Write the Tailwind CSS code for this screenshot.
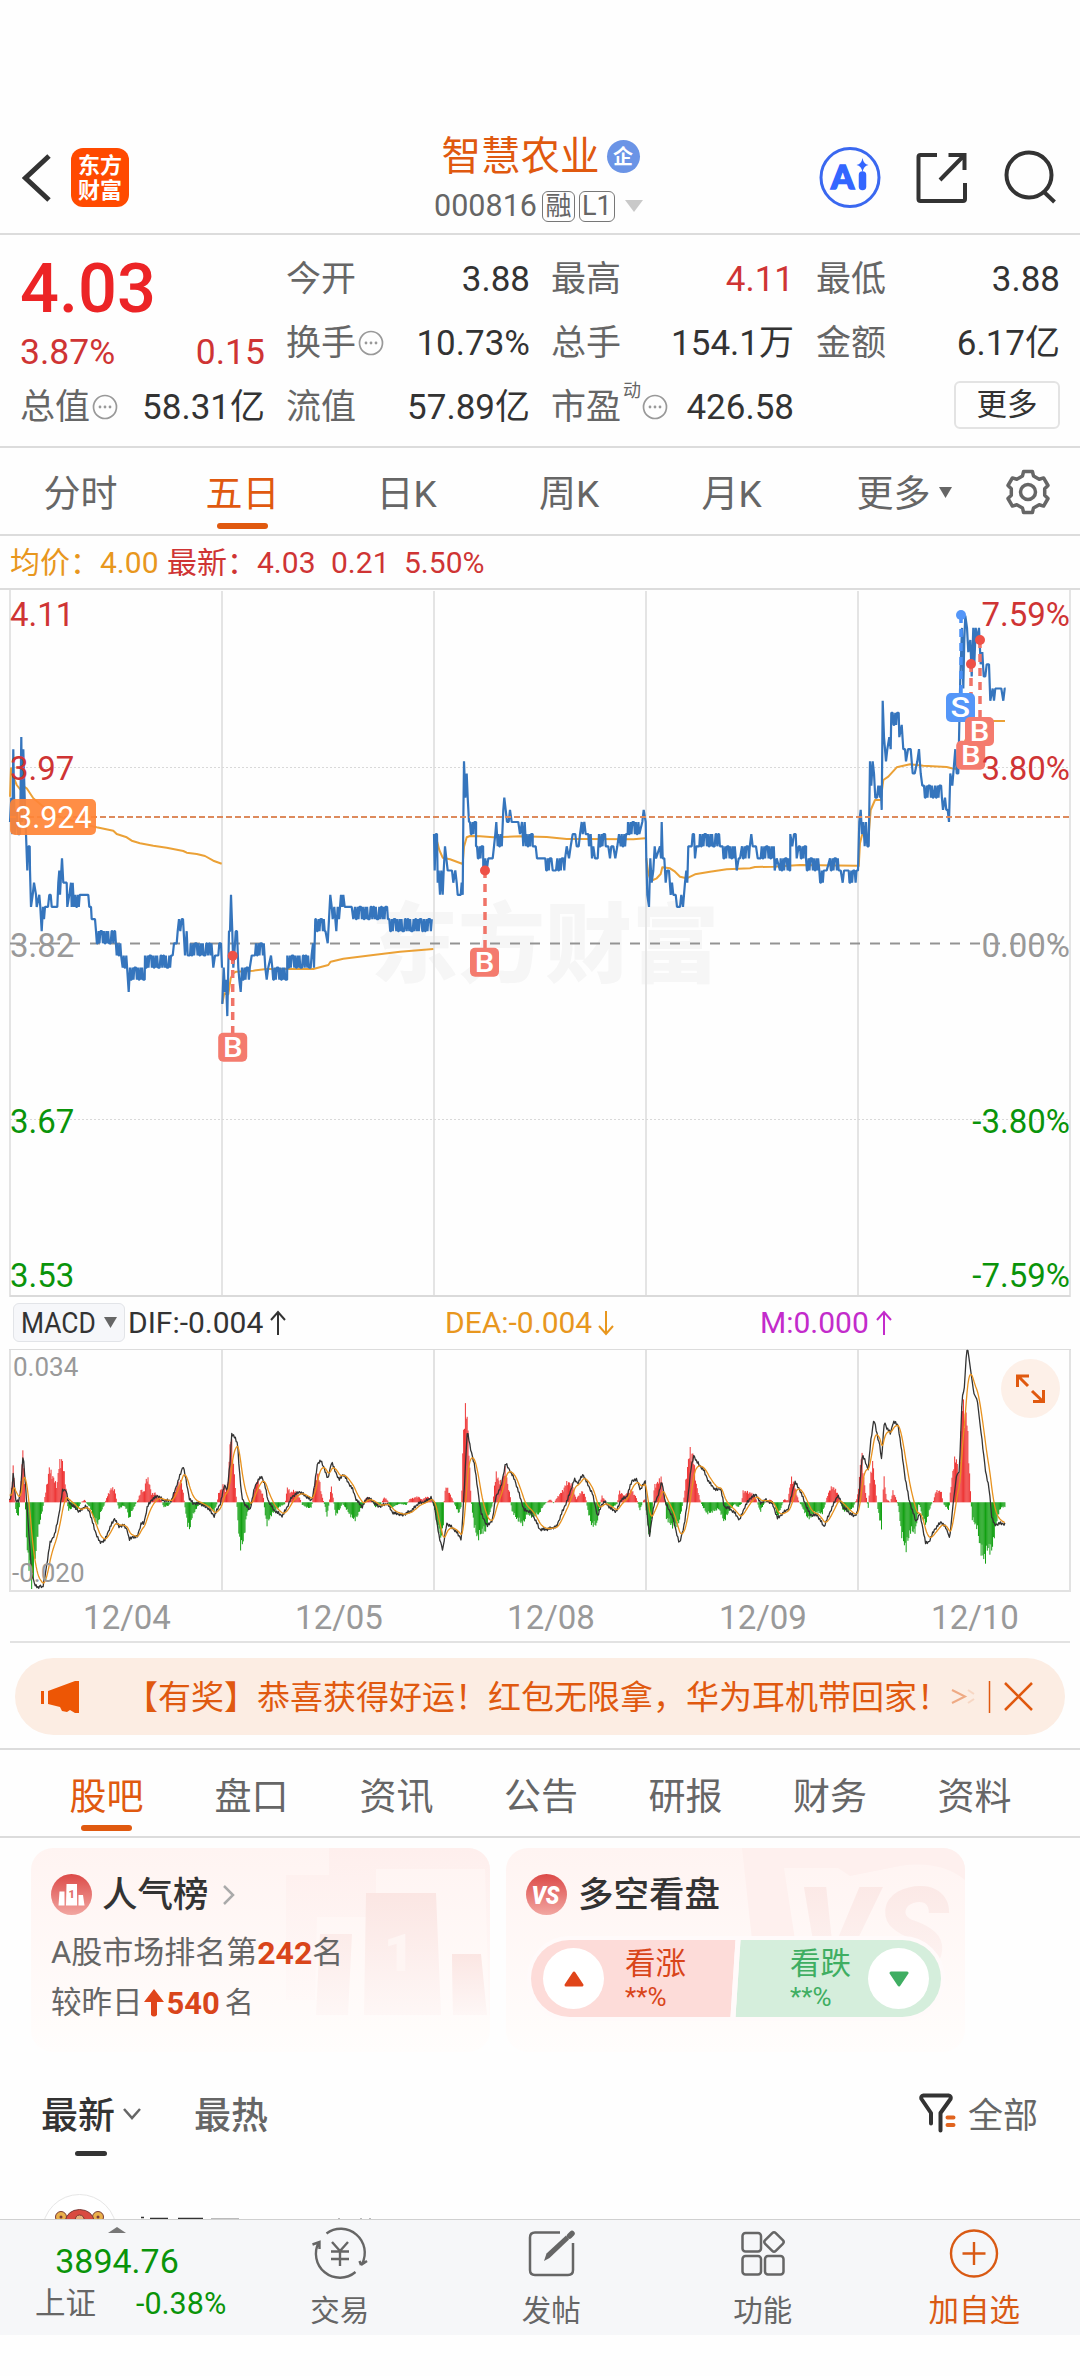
<!DOCTYPE html>
<html lang="zh-CN">
<head>
<meta charset="utf-8">
<title>智慧农业 000816</title>
<script src="https://cdn.jsdelivr.net/npm/@tailwindcss/browser@4"></script>
</head>
<body class="w-[1080px] h-[2376px] overflow-hidden bg-[#fefefe] font-[Roboto,'Noto_Sans_CJK_SC',sans-serif] text-[#666] leading-none">
<div class="flex h-[2376px] w-[1080px] flex-col">

  <!-- header -->
  <header class="flex h-[235px] shrink-0 items-start border-b-2 border-[#dcdcdc] pt-[120px]">
    <div class="flex w-[340px] items-center pt-[28px] pl-[22px]">
      <svg class="h-[58px] w-[49px]" viewBox="22 149 49 58" fill="none" stroke="#333" stroke-width="5"><path d="M49 156 L25.500 178 L49 200"/></svg>
      <div class="flex h-[59px] w-[58px] flex-col items-center justify-center rounded-[12px] bg-[#ff4a00] text-[22px] leading-[25px] font-bold text-white"><span>东方</span><span>财富</span></div>
    </div>
    <div class="flex w-[400px] flex-col items-center">
      <div class="flex h-[70px] items-center gap-[7px] pt-[3px] pl-[1px]"><span class="text-[39.500px] text-[#e0590f]">智慧农业</span><span class="flex size-[33px] items-center justify-center rounded-full bg-[#6b94e6] text-[20px] font-bold text-white">企</span></div>
      <div class="flex h-[32px] items-center pr-[3px]">
        <span class="text-[30.500px]">000816</span>
        <span class="ml-[5px] flex h-[31px] w-[33px] items-center justify-center rounded-[6px] border-[1.500px] border-[#777] text-[26px]">融</span>
        <span class="ml-[4px] flex h-[31px] w-[36px] items-center justify-center rounded-[6px] border-[1.500px] border-[#777] text-[27px]">L1</span>
        <svg class="ml-[10px] h-[14px] w-[18px]" viewBox="0 0 18 14"><path d="M0 1h18L9 13z" fill="#c9c9c9"/></svg>
      </div>
    </div>
    <svg class="mt-[24px] h-[70px] w-[340px]" viewBox="740 144 340 70" fill="none" stroke="#333" stroke-width="4">
      <circle cx="850" cy="177.500" r="29" stroke="#3a68f0" stroke-width="3"/>
      <text x="831" y="189" font-size="33" font-weight="900" fill="#3366ff" stroke="#3366ff" stroke-width="1.500" font-family="Lato">A</text>
      <path d="M862.500 175v11.500" stroke="#3366ff" stroke-width="7.500" stroke-linecap="round"/>
      <path d="M862.500 158q1 6 6 7q-5 1-6 7q-1-6-6-7q5-1 6-7z" fill="#3366ff" stroke="none"/>
      <path d="M937 155h-16.500q-2 0-2 2v42q0 2 2 2h42.500q2 0 2-2v-16M964.500 170v-15h-16M963.500 156L940 180"/>
      <circle cx="1029" cy="175" r="22.500"/><path d="M1043 191l11.500 11"/>
    </svg>
  </header>

  <!-- quote -->
  <section class="flex h-[213px] shrink-0 border-b-2 border-[#dcdcdc] text-[35px] text-[#333]">
    <div class="flex w-[287px] flex-col pr-[22px] pl-[20px]">
      <div class="pt-[20px] text-[68.500px] leading-[68px] font-medium text-[#ec2426]">4.03</div>
      <div class="mt-[10px] flex h-[40px] items-center justify-between text-[35.500px] text-[#cf3434]"><span>3.87%</span><span>0.15</span></div>
      <div class="mt-[14px] flex h-[40px] items-center"><span class="text-[#666]">总值</span><svg class="ml-[2px] size-[26px]" viewBox="0 0 26 26"><use href="#dots"/></svg><span class="ml-auto">58.31亿</span></div>
    </div>
    <div class="-ml-px flex w-[265px] flex-col gap-[24px] pt-[24px] pr-[21px]">
      <div class="flex h-[40px] items-center justify-between"><span class="text-[#666]">今开</span><span>3.88</span></div>
      <div class="flex h-[40px] items-center"><span class="text-[#666]">换手</span><svg class="ml-[2px] size-[26px]" viewBox="0 0 26 26"><use href="#dots"/></svg><span class="ml-auto">10.73%</span></div>
      <div class="flex h-[40px] items-center justify-between"><span class="text-[#666]">流值</span><span>57.89亿</span></div>
    </div>
    <div class="flex w-[265px] flex-col gap-[24px] pt-[24px] pr-[22px]">
      <div class="flex h-[40px] items-center justify-between"><span class="text-[#666]">最高</span><span class="text-[#cf3434]">4.11</span></div>
      <div class="flex h-[40px] items-center justify-between"><span class="text-[#666]">总手</span><span>154.1万</span></div>
      <div class="flex h-[40px] items-center"><span class="text-[#666]">市盈</span><span class="-mt-[32px] ml-[2px] text-[18px] text-[#666]">动</span><svg class="ml-px size-[26px]" viewBox="0 0 26 26"><use href="#dots"/></svg><span class="ml-auto">426.58</span></div>
    </div>
    <div class="flex w-[264px] flex-col gap-[24px] pt-[24px] pr-[20px]">
      <div class="flex h-[40px] items-center justify-between"><span class="text-[#666]">最低</span><span>3.88</span></div>
      <div class="flex h-[40px] items-center justify-between"><span class="text-[#666]">金额</span><span>6.17亿</span></div>
      <div class="-mt-[6px] ml-auto flex h-[48px] w-[106px] items-center justify-center rounded-[6px] border-2 border-[#e3e3e3] text-[30.500px]">更多</div>
    </div>
  </section>

  <!-- period tabs -->
  <nav class="flex h-[88px] shrink-0 border-b-2 border-[#dcdcdc] text-[37px]">
    <div class="flex w-[161px] justify-center pt-[28px]">分时</div>
    <div class="flex w-[163px] flex-col items-center pt-[28px] text-[#e0590f]">五日<span class="mt-[10px] h-[6px] w-[51px] rounded-full bg-[#e0590f]"></span></div>
    <div class="flex w-[165px] justify-center pt-[28px]">日K</div>
    <div class="flex w-[160px] justify-center pt-[28px]">周K</div>
    <div class="flex w-[165px] justify-center pt-[28px]">月K</div>
    <div class="flex w-[170px] justify-center gap-[8px] pt-[28px] pl-[10px]">更多<svg class="mt-[11px] h-[11px] w-[13px]" viewBox="0 0 13 11"><path d="M0 0h13L6.500 11z" fill="#666"/></svg></div>
    <svg class="mt-[20px] ml-[20px] h-[48px] w-[48px]" viewBox="-24 -24 48 48" fill="none" stroke="#666" stroke-width="3.500" stroke-linejoin="round"><path id="gear"/><circle r="7.500"/></svg>
  </nav>

  <div class="flex h-[54px] shrink-0 items-center border-b-2 border-[#dcdcdc] pt-[2px] pl-[10px] text-[30px] text-[#cf3434]">
    <span class="w-[90px] text-[#e8971e]">均价：</span><span class="w-[67px] text-[#e8971e]">4.00</span><span class="w-[90px]">最新：</span><span class="w-[74px]">4.03</span><span class="w-[73px]">0.21</span><span>5.50%</span>
  </div>

  <!-- price chart -->
  <svg class="h-[708px] w-[1080px] shrink-0" viewBox="0 590 1080 708" fill="none">
    <defs>
      <g id="dots"><circle cx="13" cy="13" r="11.500" fill="none" stroke="#999" stroke-width="1.700"/><g fill="#999"><circle cx="8" cy="13" r="1.400"/><circle cx="13" cy="13" r="1.400"/><circle cx="18" cy="13" r="1.400"/></g></g>
      <g id="buy"><rect x="-14.500" y="-14.500" width="29" height="29" rx="5" fill="#f47b6e"/><text y="9.700" font-size="27" font-weight="500" fill="#fff" text-anchor="middle" transform="scale(1.15 1)">B</text></g>
    </defs>
    <text x="371" y="976" font-size="87" font-weight="900" fill="#f6f6f6">东方财富</text>
    <path d="M10 590V1297M222 591V1297M434 591V1297M646 591V1297M858 591V1297M1070 590V1297" stroke="#e4e4e4" stroke-width="2"/>
    <path d="M10 1296H1070" stroke="#dadada" stroke-width="2"/>
    <path d="M10 767.500H1070M10 1119.500H1070" stroke="#d9d9d9" stroke-dasharray="2 2"/>
    <path d="M10 943.500H1070" stroke="#939393" stroke-width="2" stroke-dasharray="10 10"/>
    <path id="avg" stroke="#eba136" stroke-width="2" stroke-linejoin="round"/>
    <path id="price" stroke="#3575bd" stroke-width="2.200" stroke-linejoin="bevel"/>
    <path d="M10 817H1070" stroke="#dd8a5c" stroke-width="1.800" stroke-dasharray="6 3"/>
    <g stroke="#f07468" stroke-width="3.500" stroke-dasharray="8 6"><path d="M232.700 956V1033M485 870V948M980 640V718M971 664V742"/><path d="M961 615V694" stroke="#4a90f5"/></g>
    <g fill="#ee5147"><circle cx="232.700" cy="955.700" r="5"/><circle cx="485" cy="870.500" r="5"/><circle cx="980" cy="640" r="5"/><circle cx="971" cy="664" r="5"/><circle cx="961" cy="615" r="5" fill="#5496f8"/></g>
    <rect x="946" y="693" width="29" height="29" rx="5" fill="#5496f8"/><text x="835" y="717.500" font-size="28" font-weight="500" fill="#fff" text-anchor="middle" transform="scale(1.15 1)">S</text>
    <use href="#buy" x="232.700" y="1047.300"/><use href="#buy" x="484.500" y="962.300"/><use href="#buy" x="970.700" y="755.300"/><use href="#buy" x="979.500" y="731.500"/>
    <rect x="10" y="799" width="86" height="36" rx="5" fill="#ff8436" fill-opacity=".92"/>
    <text x="15" y="828" font-size="30.500" fill="#fff">3.924</text>
    <g font-size="33" fill="#cf3434"><text x="10" y="626">4.11</text><text x="10" y="780">3.97</text><text x="10" y="957" fill="#999">3.82</text><text x="10" y="1133" fill="#0a940a">3.67</text><text x="10" y="1287" fill="#0a940a">3.53</text>
      <g text-anchor="end"><text x="1070" y="626">7.59%</text><text x="1070" y="780">3.80%</text><text x="1070" y="957" fill="#999">0.00%</text><text x="1070" y="1133" fill="#0a940a">-3.80%</text><text x="1070" y="1287" fill="#0a940a">-7.59%</text></g></g>
  </svg>

  <!-- indicator values -->
  <div class="flex h-[51px] shrink-0 items-start pt-[5px] pl-[13px] text-[30px]">
    <div class="flex h-[39px] w-[112px] items-center rounded-[6px] border border-[#e2e4e8] bg-[#f6f7fa] pl-[7px] text-[#333]"><span class="w-[83px] origin-left scale-x-[0.88]">MACD</span><svg class="h-[11px] w-[13px]" viewBox="0 0 13 11"><path d="M0 0h13L6.500 11z" fill="#666"/></svg></div>
    <div class="flex h-[39px] w-[320px] items-center gap-[7px] pl-[3px] text-[#333]">DIF:-0.004<svg class="h-[26px] w-[16px]" viewBox="0 0 16 26" fill="none" stroke="currentColor" stroke-width="2"><path d="M8 25V2M1 10l7-8l7 8"/></svg></div>
    <div class="flex h-[39px] w-[315px] items-center gap-[6px] text-[#e8971e]">DEA:-0.004<svg class="h-[26px] w-[16px]" viewBox="0 0 16 26" fill="none" stroke="currentColor" stroke-width="2"><path d="M8 1V24M1 16l7 8l7-8"/></svg></div>
    <div class="flex h-[39px] items-center gap-[7px] text-[#c32bcb]">M:0.000<svg class="h-[26px] w-[16px]" viewBox="0 0 16 26" fill="none" stroke="currentColor" stroke-width="2"><path d="M8 25V2M1 10l7-8l7 8"/></svg></div>
  </div>

  <!-- MACD chart -->
  <svg class="h-[243px] w-[1080px] shrink-0" viewBox="0 1349 1080 243" fill="none">
    <path d="M10 1349V1591M222 1349V1591M434 1349V1591M646 1349V1591M858 1349V1591M1070 1349V1591M9 1591H1071" stroke="#e2e2e2" stroke-width="2"/>
    <path d="M9 1349.500H1071" stroke="#dcdcdc"/>
    <path id="up" stroke="#ee3434" stroke-width="1"/>
    <path id="down" stroke="#12a012" stroke-width="1"/>
    <path id="dif" stroke="#333" stroke-width="1.300" stroke-linejoin="round"/>
    <path id="dea" stroke="#e8921e" stroke-width="1.300" stroke-linejoin="round"/>
    <g font-size="26" fill="#999"><text x="13" y="1376">0.034</text><text x="12" y="1582">-0.020</text></g>
    <circle cx="1030.500" cy="1388.500" r="29.500" fill="#fdf0e8"/>
    <path d="M1028 1386L1018 1376M1029 1376H1017.500V1387M1032 1391L1043 1401.500M1033 1401.500H1043.500V1390" stroke="#e0590f" stroke-width="3"/>
  </svg>

  <div class="mx-[10px] flex h-[51px] shrink-0 items-center border-b-2 border-[#e2e2e2] pt-[2px] pl-[11px] text-[33px] text-[#999]">
    <span class="w-[212px] shrink-0 text-center">12/04</span><span class="w-[212px] shrink-0 text-center">12/05</span><span class="w-[212px] shrink-0 text-center">12/08</span><span class="w-[212px] shrink-0 text-center">12/09</span><span class="w-[212px] shrink-0 text-center">12/10</span>
  </div>

  <!-- announcement -->
  <div class="h-[107px] shrink-0 border-b-2 border-[#dcdcdc] px-[15px] pt-[15px]">
    <div class="flex h-[77px] items-center rounded-full bg-[#fcede3] pl-[25px] text-[33px] text-[#e0590f]">
      <svg class="h-[34px] w-[40px]" viewBox="0 0 40 34"><path d="M1 11h3v13H1zM8 11L35 1h4v32h-4l-5-3l-3 2l-5-1l-2-4L8 24z" fill="#ed5605"/></svg>
      <span class="ml-[45px] w-[824px] pt-[2px] whitespace-nowrap">【有奖】恭喜获得好运！红包无限拿，华为耳机带回家！</span>
      <svg class="h-[34px] w-[100px]" viewBox="949 1680 100 34" fill="none" stroke="#e0590f" stroke-width="2"><path d="M952 1690l13 6.500l-13 6.500" stroke-opacity=".45"/><path d="M968 1690l6 4M968 1703l6-4" stroke-opacity=".15"/><path d="M989.500 1681v32" stroke-width="1.500"/><path d="M1005 1683l27 27M1032 1683l-27 27" stroke-width="2.500"/></svg>
    </div>
  </div>

  <nav class="flex h-[88px] shrink-0 border-b-2 border-[#dcdcdc] pl-[34px] text-[37px]">
    <div class="flex w-[145px] flex-col items-center pt-[29px] text-[#e0590f]">股吧<span class="mt-[9px] h-[6px] w-[51px] rounded-full bg-[#e0590f]"></span></div>
    <div class="w-[145px] pt-[29px] text-center">盘口</div><div class="w-[145px] pt-[29px] text-center">资讯</div><div class="w-[144px] pt-[29px] text-center">公告</div><div class="w-[145px] pt-[29px] text-center">研报</div><div class="w-[144px] pt-[29px] text-center">财务</div><div class="w-[145px] pt-[29px] text-center">资料</div>
  </nav>

  <!-- cards -->
  <section class="flex h-[214px] shrink-0 gap-[16px] pt-[10px] pl-[31px]">
    <div class="relative flex h-[204px] w-[459px] flex-col overflow-hidden rounded-[22px] bg-gradient-to-b from-[#fff4f2] to-[#fffdfc] pl-[20px]">
      <svg class="absolute inset-0 h-full w-full" viewBox="31 1848 459 204">
        <defs><linearGradient id="fade" x1="0" y1="0" x2="0" y2="1"><stop offset="0" stop-color="#fbe6e3"/><stop offset="1" stop-color="#fef7f6"/></linearGradient>
        <linearGradient id="soft" x1="0" y1="0" x2="0" y2="1"><stop offset="0" stop-color="#feefed"/><stop offset="1" stop-color="#fffaf9"/></linearGradient>
        <linearGradient id="ball" x1="0" y1="0" x2="0" y2="1"><stop offset="0" stop-color="#dc4a48"/><stop offset="1" stop-color="#f2a6a1"/></linearGradient></defs>
        <path d="M329 1848H490V2015H489L485 1869H376V1917H317L315 2000H286V1875H329z" fill="url(#soft)"/>
        <path d="M397 1893H467L472 2015H395zM351 1934H383L379 2015H347zM483 1954H490V2015H484z" fill="url(#fade)" transform="translate(-31 0)"/>
        <path d="M452 1954H481L487 2015H453z" fill="url(#fade)"/>
        <text x="384" y="1971" font-size="52" font-weight="900" font-family="Roboto" fill="#fef5f3">1</text>
      </svg>
      <div class="relative flex items-center pt-[26px] text-[35.500px] font-medium text-[#333]">
        <svg class="mr-[10px] size-[41px]" viewBox="0 0 41 41"><circle cx="20.500" cy="20.500" r="20.500" fill="url(#ball)"/><path d="M15.500 10h10.500v21.500H15zM8.500 17.500h5V31.500h-6zM27.500 21h4.500l1.500 10.500h-6z" fill="#fff"/><text x="17.500" y="24" font-size="11" font-weight="900" fill="#e2706c">1</text></svg>
        <span class="pt-[2px]">人气榜</span>
        <svg class="ml-[14px] h-[20px] w-[12px]" viewBox="0 0 12 20" fill="none" stroke="#aaa" stroke-width="2.500"><path d="M1 1l9 9l-9 9"/></svg>
      </div>
      <div class="relative mt-[20px] flex h-[35px] items-center text-[31px]">A股市场排名第<b class="text-[32px] text-[#d9451a]">242</b>名</div>
      <div class="relative mt-[17px] flex h-[32px] items-center text-[30.500px]">较昨日<svg class="mx-px h-[30px] w-[20px]" viewBox="0 0 20 30"><path d="M10 1l10 13h-7v13q-3 3-6 0V14H0z" fill="#e0451a"/></svg><b class="ml-[2px] text-[31px] text-[#d9451a]">540</b><span class="ml-[5px] text-[29px]">名</span></div>
    </div>
    <div class="relative flex h-[204px] w-[459px] flex-col overflow-hidden rounded-[22px] bg-gradient-to-b from-[#fff4f2] to-[#fffdfc] pl-[20px]">
      <svg class="absolute inset-0 h-full w-full" viewBox="506 1848 459 204">
        <path d="M742 1848H965V1880Q940 1860 900 1866L850 1876L838 1868H784L795 1940H752z" fill="#fef0ee"/>
        <text x="796" y="1974" font-size="122" font-weight="900" font-style="italic" font-family="Roboto" fill="url(#fade)">VS</text>
      </svg>
      <div class="relative flex items-center pt-[26px] text-[35.500px] font-medium text-[#333]">
        <svg class="mr-[11px] size-[41px]" viewBox="0 0 41 41"><circle cx="20.500" cy="20.500" r="20.500" fill="url(#ball)"/><text x="19.500" y="30" font-size="26" font-weight="900" font-style="italic" fill="#fff" text-anchor="middle" textLength="28" lengthAdjust="spacingAndGlyphs">VS</text></svg>
        <span class="pt-[2px]">多空看盘</span>
      </div>
      <div class="relative mt-[21px] ml-px flex h-[85px] w-[418px] overflow-hidden rounded-full border-4 border-[#fffafa]">
        <svg class="absolute inset-0 h-full w-full" viewBox="531 1940 410 77"><path d="M531 1940H735.500L730.500 2017H531z" fill="#fddcd9"/><path d="M740.500 1940H941V2017H735.500z" fill="#d5eedc"/><path d="M735.500 1940H740.500L735.500 2017H730.500z" fill="#fffafa"/></svg>
        <div class="relative flex w-full items-center">
          <span class="ml-[12px] flex size-[61px] items-center justify-center rounded-full bg-white"><svg class="h-[16px] w-[20px]" viewBox="0 0 20 16"><path d="M10 2L18 14H2z" fill="#e0451a" stroke="#e0451a" stroke-width="3" stroke-linejoin="round"/></svg></span>
          <span class="ml-[21px] flex flex-col gap-[3px] pt-px text-[#d9451a]"><span class="text-[30.500px] leading-[32px]">看涨</span><span class="text-[26px] leading-[28px]">**%</span></span>
          <span class="ml-auto flex flex-col gap-[3px] pt-px text-[#3fae62]"><span class="text-[30.500px] leading-[32px]">看跌</span><span class="text-[26px] leading-[28px]">**%</span></span>
          <span class="mr-[12px] ml-[17px] flex size-[61px] items-center justify-center rounded-full bg-white"><svg class="h-[16px] w-[20px]" viewBox="0 0 20 16"><path d="M10 14L18 2H2z" fill="#3fae62" stroke="#3fae62" stroke-width="3" stroke-linejoin="round"/></svg></span>
        </div>
      </div>
    </div>
  </section>

  <!-- post list -->
  <div class="flex h-[142px] shrink-0 pt-[46px] pr-[42px] pl-[41px] text-[37px] font-medium">
    <div class="flex flex-col text-[#333]"><div class="flex items-center gap-[8px]">最新<svg class="-mt-[6px] h-[12px] w-[18px]" viewBox="0 0 18 12" fill="none" stroke="#666" stroke-width="2.500"><path d="M1 1l8 9l8-9"/></svg></div><span class="mt-[16px] ml-[34px] h-[5px] w-[32px] rounded-full bg-[#333]"></span></div>
    <div class="ml-[53px]">最热</div>
    <div class="ml-auto flex h-[37px] items-center gap-[11px] text-[35px] font-normal"><svg class="-mt-[7px] h-[40px] w-[38px]" viewBox="918 2093 38 40" fill="none" stroke="#333" stroke-width="4" stroke-linecap="round" stroke-linejoin="round"><path d="M930 2123.500V2113L920.500 2099q-1-3 2-3.500h25q3 .5 2 3.500L939.500 2113v17.500"/><path d="M946.500 2117.500h6M946.500 2125h6" stroke="#e0641f"/></svg>全部</div>
  </div>
  <div class="flex h-[25px] shrink-0 overflow-hidden pl-[42px]">
    <svg class="h-[25px] w-[400px]" viewBox="42 2194 400 25"><circle cx="79.500" cy="2231.500" r="37" fill="#fff" stroke="#e6e6e6"/><g stroke="#7a3a35"><circle cx="61" cy="2217" r="5.500" fill="#eab04a"/><circle cx="98" cy="2217" r="5.500" fill="#eab04a"/><path d="M65 2222q2-12 14.500-12.500q13 .5 15 12.500z" fill="#d94b40"/><path d="M75 2222q0-7 4.500-7q5 0 5 7z" fill="#eab07a"/></g><circle cx="61" cy="2217" r="1.500" fill="#7a3a35"/><circle cx="98" cy="2217" r="1.500" fill="#7a3a35"/><path d="M141 2217.500h3M150 2218.500h18M178 2218.500h25" stroke="#333" stroke-width="1.500"/><path d="M211 2218.500h28M338 2218.500h2M360 2218.500h2M369 2218.500h2" stroke="#bbb"/></svg>
  </div>

  <!-- bottom bar -->
  <footer class="flex h-[116px] shrink-0 border-t border-[#d0d0d0] bg-[#f6f7f9] text-[29.500px]">
    <div class="flex w-[234px] flex-col items-center text-[#0a940a]">
      <svg class="mt-[7px] h-[6px] w-[18px]" viewBox="0 0 18 6"><path d="M0 6L9 0l9 6z" fill="#777"/></svg>
      <span class="mt-[10px] text-[34px] leading-[36px]">3894.76</span>
      <div class="mt-[9px] flex w-full items-center pl-[35px] text-[30.500px] leading-[32px]"><span class="w-[101px] text-[#666]">上证</span><span>-0.38%</span></div>
    </div>
    <div class="flex w-[211.500px] flex-col items-center"><svg class="mt-[6px] h-[54px] w-[60px]" viewBox="310 2226 60 54" fill="none" stroke="#666" stroke-width="2.400"><path d="M326.500 2233.500A24 24 0 0 1 362 2264M361 2265l6-4M361 2265l-1.500-4M355.500 2272A24 24 0 0 1 319 2242M312.500 2244.500l7-2.500l0 7M332 2242l8 9l8-9M340 2251v15M331 2251.500h18M331 2259h18"/></svg><span class="mt-[15px] leading-[32px]">交易</span></div>
    <div class="flex w-[211.500px] flex-col items-center"><svg class="mt-[6px] h-[54px] w-[60px]" viewBox="521 2226 60 54" fill="none" stroke="#666" stroke-width="2.500"><path d="M560 2232.500h-25q-5 0-5 5v32.500q0 5 5 5h33q5 0 5-5v-27"/><path d="M544 2261l2.500-7.500L566 2235.500l3 4L549.500 2258z" fill="#666" stroke="none"/><path d="M569.500 2236l2.500-2.500" stroke-width="5.500" stroke-linecap="round"/></svg><span class="mt-[15px] leading-[32px]">发帖</span></div>
    <div class="flex w-[211.500px] flex-col items-center"><svg class="mt-[6px] h-[54px] w-[60px]" viewBox="733 2226 60 54" fill="none" stroke="#666" stroke-width="2.500"><rect x="742.500" y="2233" width="18.500" height="18.500" rx="3"/><rect x="742.500" y="2256" width="18.500" height="18.500" rx="3"/><rect x="765" y="2256" width="18.500" height="18.500" rx="3"/><rect x="766.500" y="2234.500" width="15" height="15" rx="2.500" transform="rotate(45 774 2242)"/></svg><span class="mt-[15px] leading-[32px]">功能</span></div>
    <div class="flex w-[211.500px] flex-col items-center text-[#d95a14]"><svg class="mt-[6px] h-[54px] w-[60px]" viewBox="943.500 2226 60 54" fill="none" stroke="currentColor" stroke-width="2.400"><circle cx="973.500" cy="2253.500" r="23"/><path d="M973.500 2242v23M962 2253.500h23"/></svg><span class="mt-[15px] text-[30.500px] leading-[32px]">加自选</span></div>
  </footer>
</div>

<script>
const $ = id => document.getElementById(id);

// Gear outline: six teeth around the hub.
let g = '';
for (let i = 0; i < 6; i++) {
  [[-12, 21], [12, 21], [19, 17], [41, 17]].forEach(([a, r]) => {
    const t = (i * 60 - 90 + a) * Math.PI / 180;
    g += (g ? 'L' : 'M') + (r * Math.cos(t)).toFixed(1) + ' ' + (r * Math.sin(t)).toFixed(1);
  });
}
$('gear').setAttribute('d', g + 'z');

// Intraday prices: "x,ticks" is a point, "x0-x1:hi/lo" a stretch alternating between two ticks.
const days = [
  [0, '30,10 34,12 37,9 40,16 44,9 50,11 54,9 60,9 64,17 67,10 70,16 74,12 78,9 82,6 85,8 89,8 90,6 93,3 98,4 102,5 108,4 110,3 118,4 121,3 125,1 129,3 132,2 135,3 144,3 148,4 152,4 155,3 172,3 175,5 178,6 180,4 186,7 190,5 200,5 202,3 208,4 213,5 215,3 218,5 222,3 226-240:4/3 241,4 265,4 268,3 273,3 275,2 285,2 288-345:1/0 350,-1 353-365:0/-1 368,-2 371-383:-1/-2 386,-4 390-432:-2/-3 435-515:-1/-2 518,-1 522,0 530,0 533,1 537,2 541,1 545,2 549,2 555,-1 560,1 563,-1 570,-1 572-635:0/-1 640,-2 645,-1 655,-1 658,0 663,0 666,-2'],
  [0, '667,-5 671,-2 675,-4 678,-3 682,-6 687,1 690,1 693,4 697,1 700,-2 703,-1 707,1 711,1 715,-2 718,-3 722,-4 726-752:-2/-3 755,-1 765,-1 768-792:0/-1 796,-2 800,-3 805,-2 813,-1 817-860:-2/-3 862-936:-1/-2 939,0 942,-2 946,2 948-976:2/1 983,0 987,2 991,4 995,3 998,2 1003,3 1009,1 1013,3 1017,2 1023,4 1027,3 1030,4 1034,3 1055,3 1060,2 1065-1165:3/2 1168-1297:2/1'],
  [1260, '42,9 44,6 47,9 51,9 53,5 56,6 60,4 64,6 68,4 71,6 75,8 79,7 83,6 96,6 100,5 106,6 110,5 113,4 122,4 125,5 128,4 130,10 132,15 136,12 140,14 143,12 147,10 150-165:10/9 168,8 171-187:8/7 190,6 196,7 200,6 205,7 218,7 222,8 226,9 229,10 233,8 235-247:9/8 250,11 253,12 257,11 261,10 266,10 270,11 275,10 295,10 300,9 306,10 310,8 314,10 318,8 320-334:9/8 338,8 347,8 351,7 372,7 376-392:7/6 398,6 408,6 412-437:7/6 440,8 447,7 452,8 458,9 466,9 470,8 476,8 480,9 485,10 488,9 493,10 497,9 505,9 507,8 512,9 516,7 520,8 525,7 533,7 537-553:9/8 557,8 565,8 570,7 574,8 580,8 586,7 592,8 597,9 602,8 605-622:9/8 624-660:10/9 667,10 671,11 677,10'],
  [1260, '679,7 682,4 687,3 691,7 695,5 700,6 704,8 708,7 720,8 723,7 725,10 728,7 733,7 737,5 741,6 747,6 752,4 756,5 760,4 767,4 771,3 780,3 784,4 789,3 795,5 799,6 802,5 805,8 815,8 818,9 822,9 825,7 829,8 838,8 840-900:9/8 905,8 908-945:8/7 950,6 956,7 960,7 966-990:8/7 994,9 998,8 1008,8 1013,7 1022,7 1025-1062:8/7 1064,6 1070,7 1080,6 1082-1108:7/6 1111,9 1117,8 1122,9 1127,9 1130,7 1136,8 1140-1155:8/7 1158-1195:7/6 1198-1218:6/5 1220,6 1230-1258:7/6 1262,6 1268,5 1272,6 1282,6 1286-1310:6/5 1313,6'],
  [2340, '234,6 238,10 242,11 246,9 250,10 254,8 258,10 262,8 266,8 268,11 270,15 274,13 278,15 282,14 286,12 291,12 295,13 300,12 302,13 305,11 308,20 312,17 318,15 322,16 328,17 332,16 334,19 338-354:19/18 358,17 365,18 370,16 375,16 378,15 384,16 392,16 398,14 404,14 412,15 417,16 422,14 427,13 432-460:13/12 465-486:13/12 489,11 495,12 499,11 503,11 507,10 511,14 517,13 520,14 526,16 530,14 535,14 538,18 541,22 546,26 550,21 553,25 556,27 561,26 565,24 571,25 575,22 580,26 583,23 587,26 591,25 597,26 602,23 607,24 611,22 616,22 620,23 627,23 631,20 638,21 642,20 646,21 664,21 670,20 674,21 677,21']
];
let d = '';
days.forEach(([off, s], n) => {
  const pts = [];
  s.split(' ').forEach(t => {
    const m = t.match(/^(\d+)-(\d+):(-?\d+)\/(-?\d+)$/);
    if (!m) { pts.push(t.split(',').map(Number)); return; }
    let x = +m[1], hi = true, i = 0;
    while (x <= +m[2]) {
      pts.push([x, hi ? +m[3] : +m[4]]);
      const hold = [0, 2.600, 0, 0, 5.200, 0, 0, 2.600, 0, 0, 0, 5.200, 2.600][i++ % 13];
      if (hold) { x += hold; pts.push([x, hi ? +m[3] : +m[4]]); }
      x += 2.600; hi = !hi;
    }
  });
  const start = n === 1 || n === 2 ? 'M' : 'L';
  pts.forEach(([x, k], i) => d += (i ? 'L' : (d ? start : 'M')) + ((x + off) / 3).toFixed(1) + ' ' + (580 + (1090 - 36.400 * k) / 3).toFixed(1));
});
$('price').setAttribute('d', d);

const averages = [
  [0, '30,650 33,565 40,590 50,615 62,630 72,620 80,625 100,655 130,680 180,710 240,730 290,742 340,752 350,762 380,772 395,782 420,790 460,797 500,803 550,813 560,818 590,822 615,828 640,842 665,851'],
  [0, '667,1270 673,1240 685,1243 692,1195 700,1180 708,1175 760,1172 800,1167 940,1167 985,1155 992,1145 1030,1136 1120,1125 1200,1115 1300,1107'],
  [1260, '44,770 50,780 58,810 68,833 90,838 128,852 132,800 140,772 150,768 180,769 220,772 300,769 380,771 440,777 500,777 640,778 675,775'],
  [1260, '679,835 685,880 692,903 710,895 722,882 727,862 750,865 765,875 780,890 800,895 825,883 870,875 920,868 990,865 1005,861 1060,860 1140,855 1312,857'],
  [2340, '236,860 240,790 246,765 266,765 272,690 285,660 302,660 310,600 325,590 350,562 390,553 430,557 500,561 515,565 530,567 548,500 565,460 600,430 640,423 675,423']
];
$('avg').setAttribute('d', averages.map(([off, s]) => 'M' + s.split(' ').map(p => { const [x, y] = p.split(',').map(Number); return ((x + off) / 3).toFixed(1) + ' ' + (580 + y / 3).toFixed(1); }).join('L')).join(''));

// MACD histogram and lines, in two halves.
const parse = (a, b) => a.split(' ').map(p => p.split(',').map(Number)).concat(b.split(' ').map(p => { const [x, y] = p.split(',').map(Number); return [x + 1568, y]; }));
const hist = parse(
 '28,10 33,40 39,125 43,10 48,-40 55,-40 60,60 67,165 72,40 77,-120 83,-185 92,-260 100,-200 108,-110 118,-50 128,0 134,40 143,105 152,85 165,50 172,120 180,135 188,80 194,20 198,-25 207,-20 215,-10 225,-25 235,0 247,8 252,-5 262,-15 272,-50 285,-68 293,-30 304,-5 312,20 322,42 332,44 340,0 345,-20 360,-10 370,-25 375,-55 382,-30 392,-10 402,10 410,40 418,30 424,70 432,72 440,25 450,30 460,15 470,5 475,-15 490,-10 500,5 505,30 515,50 525,70 532,30 538,-20 545,-70 551,-85 558,-45 570,-20 580,-5 595,-10 610,-15 622,-28 630,-5 636,35 644,40 650,60 655,30 662,60 670,212 676,150 684,40 688,-10 694,-100 700,-148 710,-100 718,-30 726,-15 732,5 738,40 748,70 755,40 765,20 769,-30 775,-70 785,-45 795,-30 810,-15 828,-5 834,45 845,30 855,38 870,15 878,-8 895,-18 905,-15 910,25 920,90 925,85 935,20 942,-5 950,-45 956,0 962,50 968,10 975,-40 985,-25 995,-3 1005,-20 1020,-45 1033,-55 1045,-25 1055,-8 1062,12 1070,15 1080,5 1090,-15 1105,-8 1115,15 1125,8 1135,-20 1145,-12 1160,-5 1180,-8 1190,10 1205,15 1215,18 1225,8 1240,18 1252,10 1260,-10 1268,-60 1280,-110 1287,-80 1291,30 1297,50 1305,30 1320,-5 1332,-35 1340,-10 1345,200 1354,315 1360,200 1366,60 1370,-15 1378,-80 1388,-112 1400,-90 1410,-90 1420,-40 1432,0 1436,50 1442,95 1450,60 1460,70 1468,110 1475,50 1482,20 1486,-25 1500,-50 1520,-70 1530,-35 1545,-45 1567,-35',
 '0,-30 10,-10 30,10 40,-3 50,15 65,35 80,65 95,50 105,10 122,35 132,20 140,-30 150,-70 165,-70 172,-20 180,20 195,-3 210,-15 225,-5 230,35 245,20 265,40 280,15 290,-25 300,5 306,10 308,-20 318,-115 326,-40 332,50 345,65 352,80 358,30 364,5 367,-50 385,-75 402,-70 412,-20 418,10 425,80 435,160 445,145 455,50 465,8 472,-12 485,-35 500,-30 520,-20 535,-60 548,-30 565,-5 575,-15 585,-5 590,35 605,32 620,25 630,5 640,-30 650,-5 670,10 682,-10 690,-45 705,-3 708,10 720,5 730,75 738,60 745,30 752,2 760,-10 775,-45 785,-50 800,-30 820,-35 830,0 836,25 848,50 862,35 872,5 880,-25 895,-30 910,-15 922,15 928,80 934,160 942,60 950,0 954,-20 958,60 966,130 974,50 980,-10 992,-85 995,20 1000,80 1006,10 1018,0 1025,35 1035,10 1042,-20 1050,-100 1063,-145 1075,-90 1092,-90 1100,0 1110,-40 1120,-70 1135,-10 1143,5 1150,35 1165,35 1172,-5 1188,-25 1193,50 1207,150 1217,80 1226,320 1232,280 1240,265 1246,130 1251,20 1255,-50 1270,-80 1280,-150 1293,-180 1302,-135 1310,-160 1320,-100 1330,-40 1340,-15 1351,-15');
const dif = parse(
 '28,630 34,610 39,545 45,630 55,635 60,600 67,490 75,600 82,700 92,850 100,880 110,895 118,885 124,895 132,850 145,760 160,730 170,680 182,600 192,600 198,635 210,645 230,665 248,648 260,665 275,720 290,758 305,750 318,715 333,685 345,710 358,705 370,720 375,750 385,740 398,742 410,700 418,700 428,650 440,630 458,617 475,632 498,632 510,595 520,565 532,527 540,570 550,625 560,640 580,640 605,655 622,678 640,640 652,585 660,600 668,520 673,430 680,440 690,460 695,540 702,620 712,645 726,660 740,590 750,570 760,560 768,580 778,630 795,660 820,678 832,655 848,620 870,605 890,620 905,632 913,590 922,520 931,512 942,535 952,568 963,515 972,540 985,570 997,552 1010,575 1025,600 1035,630 1052,650 1067,622 1080,632 1100,650 1125,640 1140,668 1170,675 1195,662 1215,640 1235,635 1252,622 1262,650 1275,740 1286,780 1297,700 1310,710 1325,725 1340,748 1348,600 1357,420 1365,470 1377,520 1385,580 1397,670 1415,708 1430,690 1440,620 1455,590 1468,520 1480,540 1495,570 1510,620 1522,660 1540,665 1555,690 1567,718',
 '0,718 20,718 48,710 65,665 80,630 100,568 110,580 125,553 135,575 152,610 168,680 178,645 188,635 205,655 222,665 235,630 252,620 268,570 282,570 292,600 306,572 309,650 318,740 330,650 345,610 354,575 365,640 385,680 405,762 420,700 430,620 438,540 447,495 455,515 475,540 490,575 510,600 525,595 535,650 550,655 565,668 580,690 595,650 610,625 628,613 640,640 655,630 675,640 690,685 705,670 722,655 740,575 755,600 770,640 785,675 805,675 825,710 845,660 865,615 880,650 900,670 912,678 922,668 928,600 936,495 945,515 953,540 960,460 970,385 980,440 987,465 992,510 1000,395 1008,415 1018,430 1026,395 1040,405 1050,480 1060,560 1072,630 1092,695 1103,670 1112,715 1120,760 1130,755 1145,720 1165,695 1180,715 1190,745 1200,640 1210,555 1218,545 1226,320 1232,300 1239,181 1243,181 1248,220 1260,310 1270,330 1280,420 1295,550 1305,600 1312,680 1320,705 1335,700 1350,702');
const at = (a, x) => { let i = 1; while (i < a.length - 1 && a[i][0] < x) i++; const [p, q] = [a[i - 1], a[i]]; return p[1] + (q[1] - p[1]) * (x - p[0]) / (q[0] - p[0]); };
let up = '', down = '', line = '', sig = '', ema = 610;
for (let i = 0, x = 28; x <= 2919; i++, x += 2.560) {
  const px = (x / 2.904).toFixed(2), wob = [0, 4, -3, 2, -5, 3, -1][i % 7];
  const v = at(hist, x) * [1, .88, 1.050, .8, .97][i % 5];
  const seg = 'M' + px + ' 1502.300V' + (1502.300 - v / 3).toFixed(1);
  if (v > 0) up += seg; else down += seg;
  const y = at(dif, x) + (x > 2750 && x < 2850 ? 0 : wob);
  ema += (at(dif, x) - ema) * .2;
  line += (i ? 'L' : 'M') + px + ' ' + (1290 + y / 3).toFixed(1);
  sig += (i ? 'L' : 'M') + px + ' ' + (1290 + ema / 3).toFixed(1);
}
$('up').setAttribute('d', up); $('down').setAttribute('d', down);
$('dif').setAttribute('d', line); $('dea').setAttribute('d', sig);
</script>
</body>
</html>
